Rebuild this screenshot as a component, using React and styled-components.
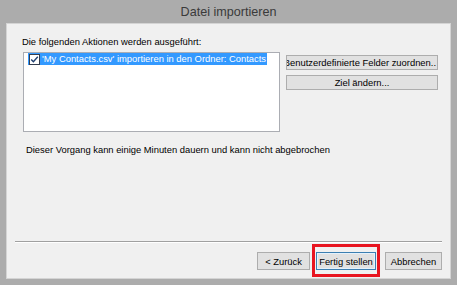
import React from "react";
import styled, { createGlobalStyle } from "styled-components";

const Global = createGlobalStyle`
	html, body {
		margin: 0;
		padding: 0;
		background: #acacac;
	}
	body {
		font-family: "Liberation Sans", Arial, sans-serif;
	}
`;

const App = () => {
	return (
		<Frame>
			<Global />
			<TitleBar>Datei importieren</TitleBar>
			<Client>
				<Body>
					<Label>Die folgenden Aktionen werden ausgeführt:</Label>
					<Row>
						<ListBox>
							<ListItem>
								<CheckBox>
									<svg width="11" height="11" viewBox="0 0 11 11">
										<rect x="0.5" y="0.5" width="10" height="10" fill="#fff" stroke="#333c4e" />
										<path d="M2.2 5.6 L4.4 7.8 L8.8 2.8" fill="none" stroke="#1f3f70" strokeWidth="1.4" />
									</svg>
								</CheckBox>
								<Selected>'My Contacts.csv' importieren in den Ordner: Contacts</Selected>
							</ListItem>
						</ListBox>
						<SideButtons>
							<Button $w={152} $clip>
								Benutzerdefinierte Felder zuordnen..
							</Button>
							<Button $w={152}>Ziel ändern...</Button>
						</SideButtons>
					</Row>
					<Note>Dieser Vorgang kann einige Minuten dauern und kann nicht abgebrochen</Note>
				</Body>
				<Separator />
				<Footer>
					<Button $w={53} $h={18}>&lt; Zurück</Button>
					<Marked>
						<Button $w={60} $h={18} $focus>
							Fertig stellen
						</Button>
					</Marked>
					<Button $w={57} $h={18}>Abbrechen</Button>
				</Footer>
			</Client>
		</Frame>
	);
};

export default App;

const Frame = styled.div`
	width: 457px;
	height: 285px;
	box-sizing: border-box;
	padding: 0 6px 6px;
	display: flex;
	flex-direction: column;
	background: #acacac;
`;

const TitleBar = styled.div`
	height: 23px;
	display: flex;
	align-items: center;
	justify-content: center;
	font-size: 12.6px;
	color: #3a3a3a;
	padding-top: 1px;
	box-sizing: border-box;
`;

const Client = styled.div`
	flex: 1;
	display: flex;
	flex-direction: column;
	background: #f0f0f0;
	border: 1px solid #d4d4d4;
	box-sizing: border-box;
	font-size: 9.4px;
	color: #000;
`;

const Body = styled.div`
	flex: 1;
	padding: 11px 0 0 15px;
`;

const Label = styled.div`
	line-height: 14px;
	height: 14px;
`;

const Row = styled.div`
	display: flex;
	align-items: flex-start;
	gap: 6px;
	margin-top: 3px;
	margin-left: 1px;
`;

const ListBox = styled.div`
	flex-shrink: 0;
	width: 257px;
	height: 80px;
	box-sizing: border-box;
	border: 1px solid #abadb3;
	background: #fff;
	padding: 0 0 0 4px;
	overflow: hidden;
`;

const ListItem = styled.div`
	display: flex;
	align-items: center;
	height: 12px;
`;

const CheckBox = styled.span`
	display: flex;
	width: 11px;
	height: 12px;
	align-items: center;
	background: #3399ff;
	padding: 0 1px;
`;

const Selected = styled.span`
	background: #3399ff;
	color: #fff;
	height: 12px;
	line-height: 12px;
	padding: 0 1px;
	white-space: nowrap;
`;

const SideButtons = styled.div`
	display: flex;
	flex-direction: column;
	gap: 5px;
	margin-top: 3px;
`;

const Button = styled.div`
	flex-shrink: 0;
	width: ${(p) => p.$w}px;
	height: ${(p) => p.$h || 15}px;
	box-sizing: border-box;
	border: 1px solid ${(p) => (p.$focus ? "#3c7fb1" : "#adadad")};
	background: #e1e1e1;
	display: flex;
	align-items: center;
	justify-content: center;
	white-space: nowrap;
	overflow: hidden;
	font-size: 9.4px;
	box-shadow: ${(p) => (p.$focus ? "inset 0 0 0 1px #e5f1fb" : "none")};
	${(p) => (p.$clip ? "justify-content: flex-end; padding-right: 1px;" : "")}
`;

const Note = styled.div`
	margin-top: 11px;
	margin-left: 4px;
	line-height: 14px;
`;

const Separator = styled.div`
	height: 1px;
	margin: 0 8px;
	background: #a0a0a0;
	border-bottom: 1px solid #fff;
`;

const Footer = styled.div`
	display: flex;
	justify-content: flex-end;
	align-items: center;
	gap: 6px;
	padding: 9px 8px 8px 0;
`;

const Marked = styled.div`
	position: relative;
	margin-right: 3px;

	&::after {
		content: "";
		position: absolute;
		top: -8px;
		bottom: -7px;
		left: -4px;
		right: -4px;
		border: 3px solid #e8141f;
		pointer-events: none;
	}
`;
